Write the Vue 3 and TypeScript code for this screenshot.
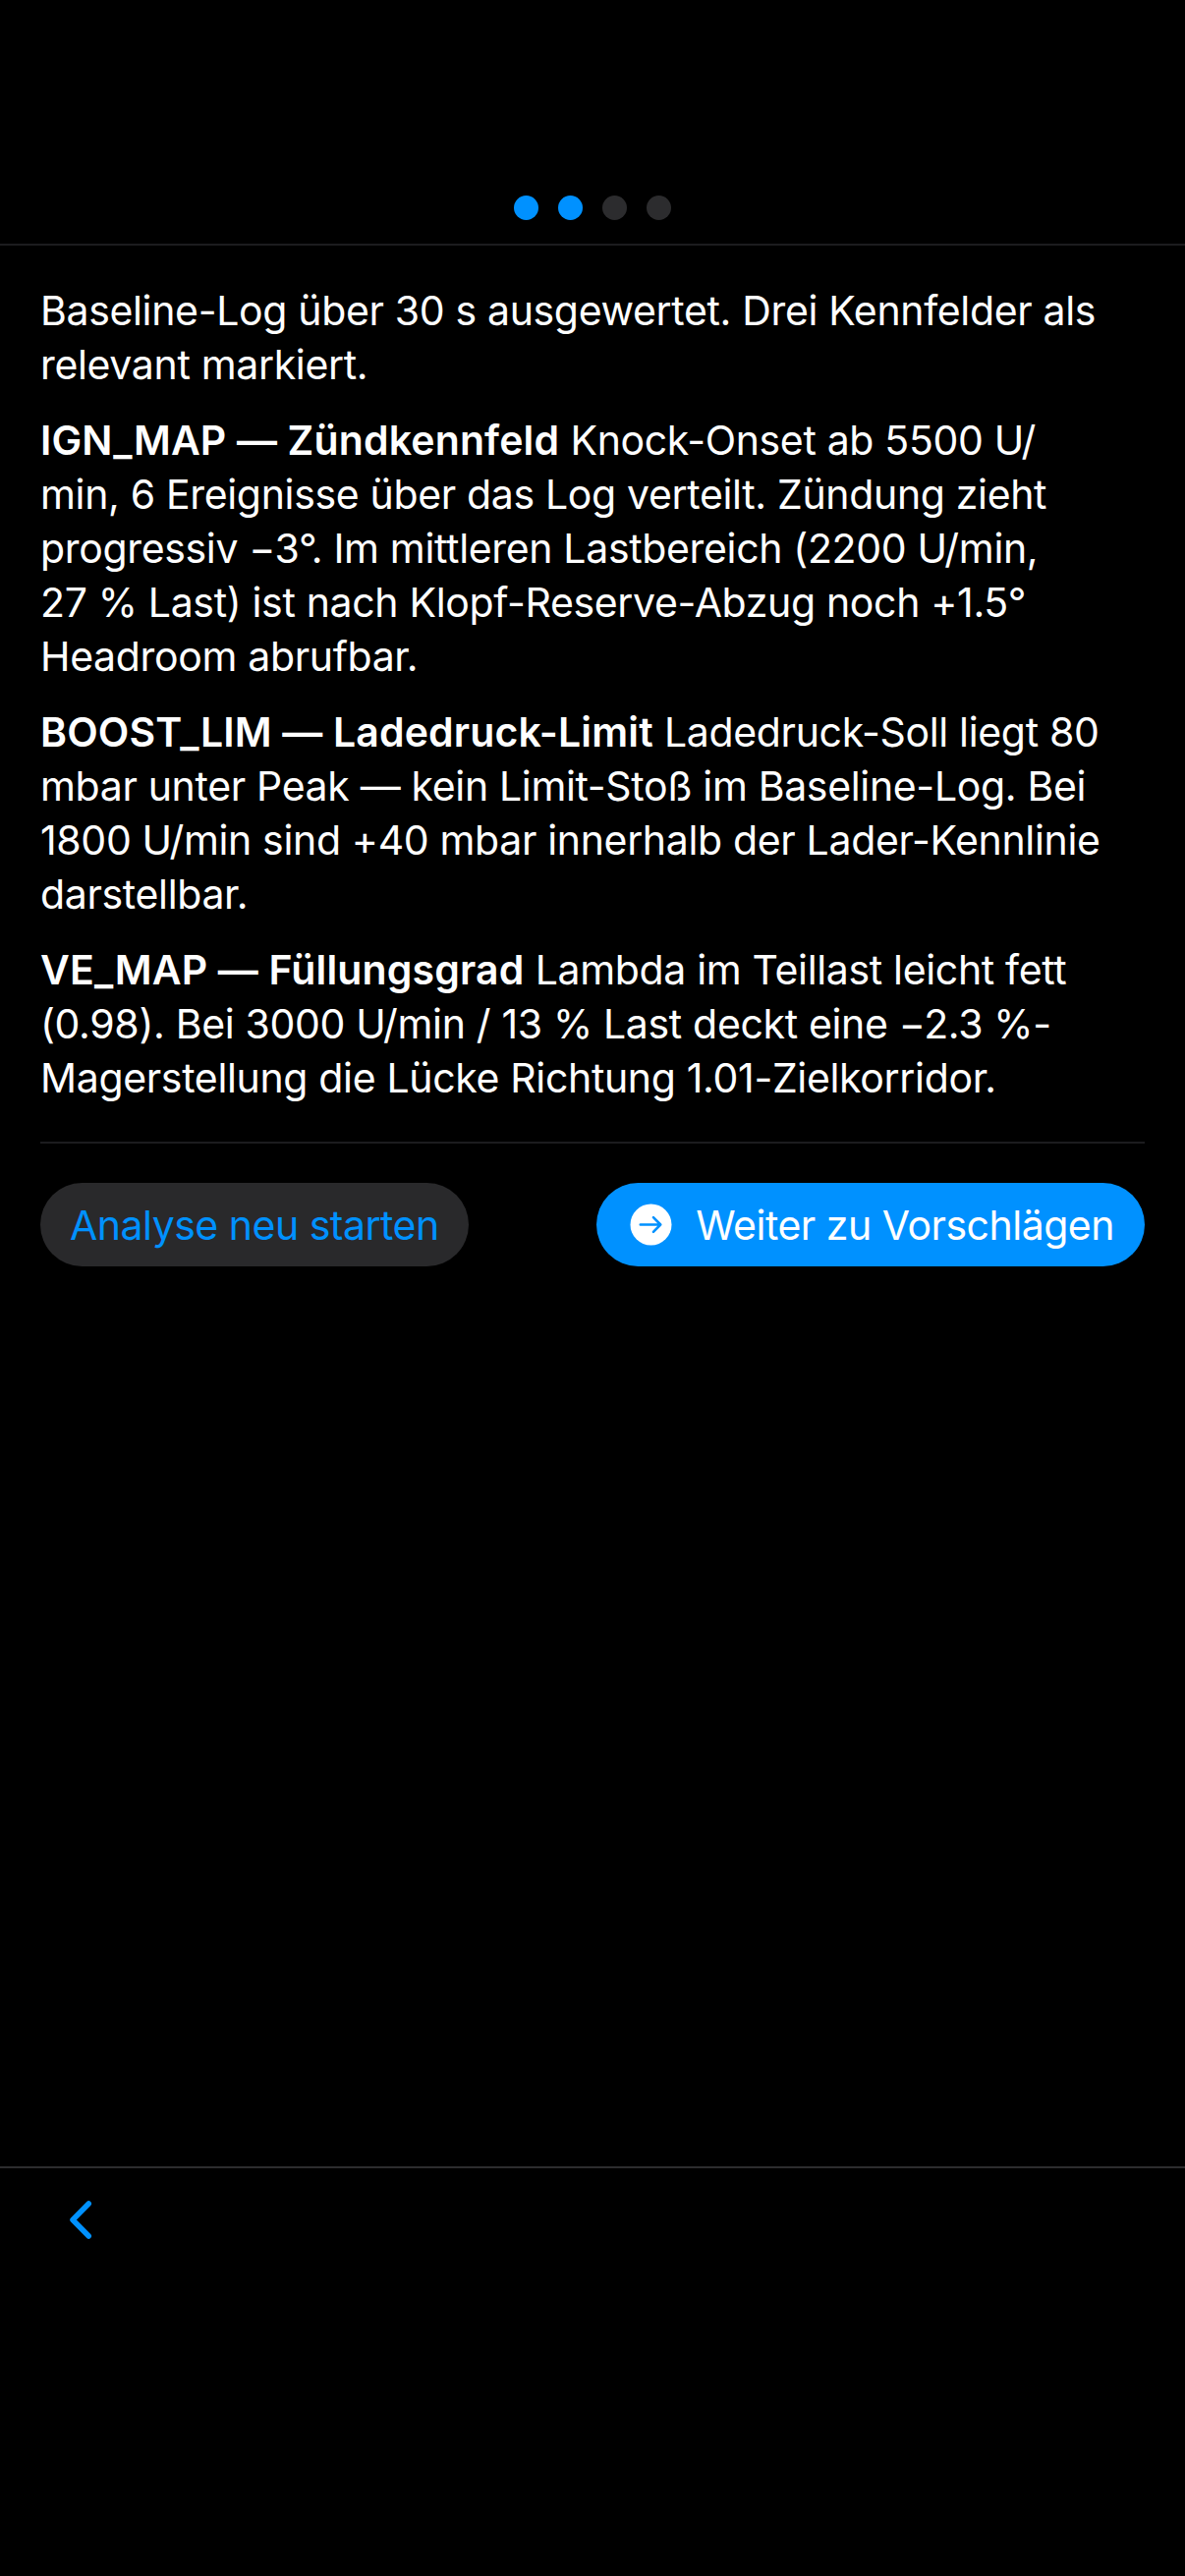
<script setup lang="ts">
interface Block {
  title?: string
  lines: string[]
}

const steps = [true, true, false, false]

const blocks: Block[] = [
  {
    lines: ['Baseline-Log über 30 s ausgewertet. Drei Kennfelder als', 'relevant markiert.'],
  },
  {
    title: 'IGN_MAP — Zündkennfeld',
    lines: [
      ' Knock-Onset ab 5500 U/',
      'min, 6 Ereignisse über das Log verteilt. Zündung zieht',
      'progressiv −3°. Im mittleren Lastbereich (2200 U/min,',
      '27 % Last) ist nach Klopf-Reserve-Abzug noch +1.5°',
      'Headroom abrufbar.',
    ],
  },
  {
    title: 'BOOST_LIM — Ladedruck-Limit',
    lines: [
      ' Ladedruck-Soll liegt 80',
      'mbar unter Peak — kein Limit-Stoß im Baseline-Log. Bei',
      '1800 U/min sind +40 mbar innerhalb der Lader-Kennlinie',
      'darstellbar.',
    ],
  },
  {
    title: 'VE_MAP — Füllungsgrad',
    lines: [
      ' Lambda im Teillast leicht fett',
      '(0.98). Bei 3000 U/min / 13 % Last deckt eine −2.3 %-',
      'Magerstellung die Lücke Richtung 1.01-Zielkorridor.',
    ],
  },
]
</script>

<template>
  <div class="screen">
    <header class="steps">
      <span
        v-for="(done, i) in steps"
        :key="i"
        class="steps__dot"
        :class="{ 'steps__dot--active': done }"
      />
    </header>

    <main class="content">
      <div class="analysis">
        <p v-for="(block, i) in blocks" :key="i" class="analysis__block">
          <strong v-if="block.title">{{ block.title }}</strong>
          <template v-for="(line, j) in block.lines" :key="j">
            <br v-if="j > 0" />{{ line }}
          </template>
        </p>
      </div>

      <div class="actions">
        <button type="button" class="btn btn--secondary">Analyse neu starten</button>
        <button type="button" class="btn btn--primary">
          <svg class="btn__icon" viewBox="0 0 44 44" aria-hidden="true">
            <circle cx="22" cy="22" r="21.5" fill="#fff" />
            <path
              d="M11 22h21M24.5 14.5 32 22l-7.5 7.5"
              fill="none"
              stroke="#0091ff"
              stroke-width="2.6"
              stroke-linecap="round"
              stroke-linejoin="round"
            />
          </svg>
          Weiter zu Vorschlägen
        </button>
      </div>
    </main>

    <footer class="toolbar">
      <button type="button" class="toolbar__back" aria-label="Zurück">
        <svg viewBox="0 0 26 40" width="26" height="40" aria-hidden="true">
          <path
            d="M22.25 3 6 19.5 22.25 36"
            fill="none"
            stroke="#0091ff"
            stroke-width="5.5"
            stroke-linecap="round"
            stroke-linejoin="round"
          />
        </svg>
      </button>
    </footer>
  </div>
</template>

<style>
html,
body {
  margin: 0;
  background: #000;
}
</style>

<style scoped>
.screen {
  display: flex;
  flex-direction: column;
  width: 1206px;
  height: 2622px;
  background: #000;
  color: #fff;
  font-family: Inter, "Noto Sans", sans-serif;
}

.steps {
  display: flex;
  justify-content: center;
  align-items: flex-end;
  gap: 20px;
  box-sizing: border-box;
  height: 250px;
  padding-bottom: 24px;
  border-bottom: 2px solid #1c1c1e;
}

.steps__dot {
  width: 25px;
  height: 25px;
  border-radius: 50%;
  background: #2c2c2e;
}

.steps__dot--active {
  background: #0091ff;
}

.content {
  flex: 1;
  padding: 0 41px;
}

.analysis {
  display: flex;
  flex-direction: column;
  gap: 22px;
  padding: 39px 0 37px;
  border-bottom: 2px solid #1c1c1e;
}

.analysis__block {
  margin: 0;
  font-size: 41px;
  line-height: 55px;
  letter-spacing: -0.34px;
  white-space: pre-wrap;
}

.analysis__block strong {
  font-weight: 600;
  letter-spacing: 0.15px;
}

.actions {
  display: flex;
  justify-content: space-between;
  margin-top: 40px;
}

.btn {
  display: flex;
  align-items: center;
  height: 85px;
  padding: 0 31px;
  border: none;
  border-radius: 42.5px;
  font-family: inherit;
  font-size: 41px;
  letter-spacing: -0.5px;
}

.btn--secondary {
  padding: 0 30px;
  background: #29292b;
  color: #0091ff;
}

.btn--primary {
  gap: 24px;
  padding-left: 34px;
  background: #0091ff;
  color: #fff;
}

.btn__icon {
  width: 43px;
  height: 43px;
}

.toolbar {
  box-sizing: border-box;
  height: 417px;
  padding: 33px 0 0 68px;
  border-top: 2px solid #2c2c2e;
}

.toolbar__back {
  display: block;
  padding: 0;
  border: none;
  background: none;
}
</style>
